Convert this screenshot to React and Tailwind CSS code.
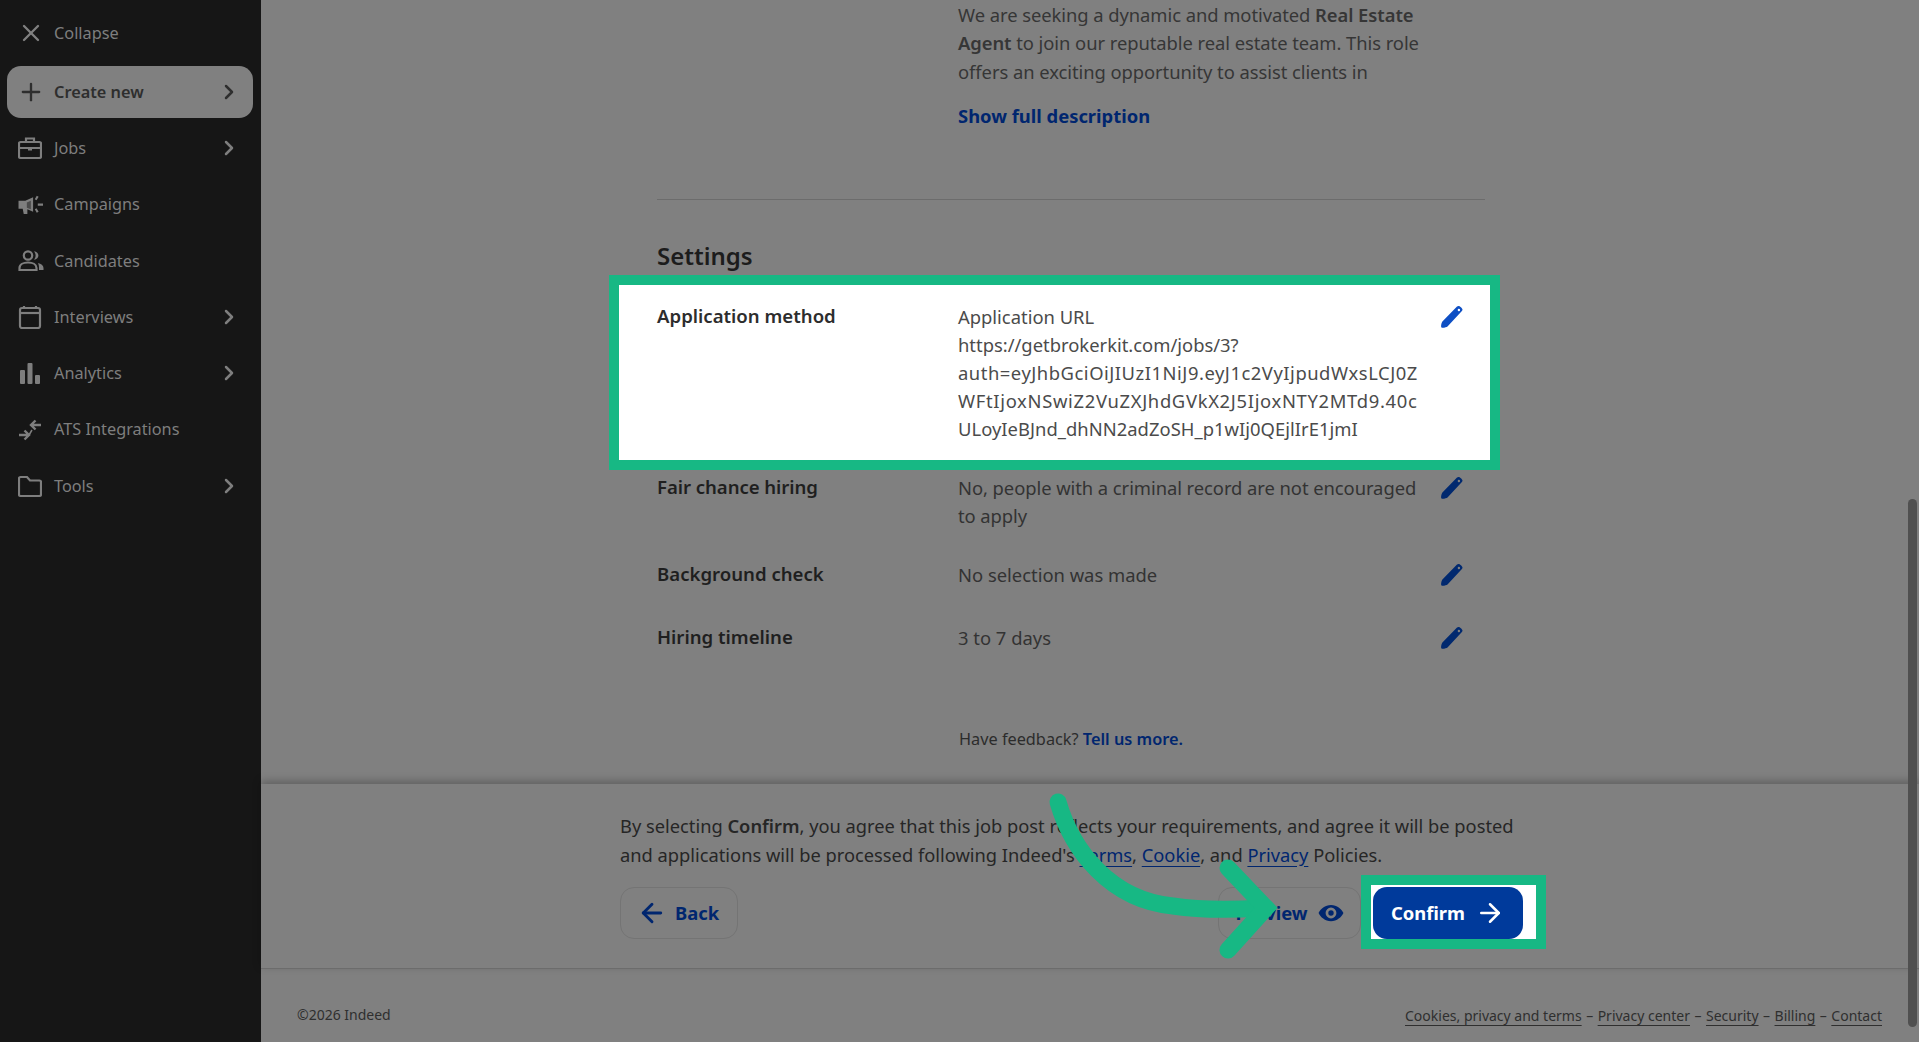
import React from 'react';
import { X, Plus, ChevronRight, ArrowLeft, ArrowRight } from 'lucide-react';

const Briefcase = () => (
  <svg width="24" height="24" viewBox="0 0 24 24" fill="none" stroke="currentColor" strokeWidth="2.200">
    <rect x="1" y="6" width="22" height="16" rx="1.500" />
    <path d="M8 6V2.500h8V6M1 12h22" />
    <path d="M10 12h4v2.500h-4z" fill="currentColor" stroke="none" />
  </svg>
);
const Megaphone = () => (
  <svg width="25" height="25" viewBox="0 0 24 24" fill="currentColor">
    <path d="M0.500 8.500h6.500L14.500 5v14L9 16.500V21H5.500l-1-5H0.500z" />
    <path d="M8.500 10v5l3.800 1.500V8.500z" fill="#161616" opacity="0.5" />
    <path d="M18 3.500l1.800 1-2 3.400-1.700-1zM19 11h5v2.200h-5zM17.800 15.500l2 3.500-1.800 1-1.900-3.500z" />
  </svg>
);
const Users = () => (
  <svg width="26" height="24" viewBox="0 0 26 24" fill="none" stroke="currentColor" strokeWidth="2.200">
    <circle cx="10" cy="6.500" r="4.200" />
    <path d="M1.500 21v-2c0-3.500 4-5.500 8.500-5.500s8.500 2 8.500 5.500v2z" />
    <path d="M16 2.200c2.800.4 4.400 2.200 4.400 4.300s-1.600 3.900-4.400 4.300c1-1.200 1.600-2.600 1.600-4.300S17 3.400 16 2.200z" fill="currentColor" stroke="none" />
    <path d="M20 14c3 .8 5.500 2.400 5.500 5v2H21v-2c0-2-.4-3.600-1-5z" fill="currentColor" stroke="none" />
  </svg>
);
const Calendar = () => (
  <svg width="24" height="24" viewBox="0 0 24 24" fill="none" stroke="currentColor" strokeWidth="2.200">
    <rect x="2" y="3" width="20" height="20" rx="2" />
    <path d="M2 8h20" />
    <path d="M6 1v3M18 1v3" />
  </svg>
);
const Bars = () => (
  <svg width="24" height="24" viewBox="0 0 24 24" fill="currentColor">
    <rect x="2" y="9" width="5" height="14" rx="1" />
    <rect x="9.500" y="2" width="5" height="21" rx="1" />
    <rect x="17" y="14" width="5" height="9" rx="1" />
  </svg>
);
const Ats = () => (
  <svg width="24" height="24" viewBox="0 0 24 24" fill="none" stroke="currentColor" strokeWidth="2.400">
    <path d="M1 17h9M6.500 12.500L11 17l-4.500 4.500" />
    <path d="M23 7h-9M17.500 2.500L13 7l4.500 4.500" />
    <path d="M11 17l3-5" strokeWidth="1.500" />
  </svg>
);
const Folder = () => (
  <svg width="24" height="24" viewBox="0 0 24 24" fill="none" stroke="currentColor" strokeWidth="2.200">
    <path d="M1 4.500A1.500 1.500 0 0 1 2.500 3h6.500l3 3.500h9.500A1.500 1.500 0 0 1 23 8v12.500a1.500 1.500 0 0 1-1.500 1.500h-19A1.500 1.500 0 0 1 1 20.500z" />
  </svg>
);

const Pencil = ({ className }) => (
  <svg width="24" height="24" viewBox="0 0 24 24" className={className} fill="currentColor">
    <path fillRule="evenodd" d="M18.500 1c1.200 0 3.900 2.200 4 3.500 0 .6-.2 1-.6 1.500L7.500 21.500c-.8.800-5 1.800-6 1-1-1 .1-5 .9-6L17 1.600c.5-.4 1-.6 1.500-.6zm.4 2.800a1.200 1.200 0 1 0 0 2.400 1.200 1.200 0 0 0 0-2.400z" />
  </svg>
);

const EyeFilled = () => (
  <svg width="26" height="26" viewBox="0 0 24 24" fill="currentColor">
    <path fillRule="evenodd" d="M12 4.500C6.500 4.500 2.300 8.200.5 12c1.800 3.800 6 7.500 11.500 7.500S21.700 15.800 23.500 12C21.700 8.200 17.500 4.500 12 4.500zM12 7a5 5 0 1 1 0 10 5 5 0 0 1 0-10zm0 2.500a2.500 2.500 0 1 0 0 5 2.500 2.500 0 0 0 0-5z" />
  </svg>
);

const navItems = [
  { label: 'Jobs', icon: Briefcase, arrow: true },
  { label: 'Campaigns', icon: Megaphone },
  { label: 'Candidates', icon: Users },
  { label: 'Interviews', icon: Calendar, arrow: true },
  { label: 'Analytics', icon: Bars, arrow: true },
  { label: 'ATS Integrations', icon: Ats },
  { label: 'Tools', icon: Folder, arrow: true },
];

const Sidebar = () => (
  <aside className="w-[261px] shrink-0 bg-[#161616] text-[#7e7e7e] text-[16.300px] pl-[7px] pr-[8px]">
    <div className="flex items-center h-[66px] pl-[10px] gap-[9px]">
      <X size={28} strokeWidth={2} className="text-[#808080]" />
      <span>Collapse</span>
    </div>
    <div className="flex items-center h-[52px] rounded-[14px] bg-[#808080] text-[#2e2e2e] font-semibold pl-[10px] pr-[12px] gap-[9px]">
      <Plus size={28} strokeWidth={2} />
      <span className="flex-1">Create new</span>
      <ChevronRight size={24} strokeWidth={2.500} />
    </div>
    <nav className="flex flex-col pt-[2px]">
      {navItems.map((item) => {
        const Icon = item.icon;
        return (
          <div key={item.label} className="flex items-center h-[56.300px] pl-[11px] pr-[12px]">
            <span className="w-[36px] shrink-0 flex items-center"><Icon /></span>
            <span className="flex-1">{item.label}</span>
            {item.arrow && <ChevronRight size={24} strokeWidth={2.500} />}
          </div>
        );
      })}
    </nav>
  </aside>
);

const Row = ({ label, pencilClass = 'text-[#01296f]', labelClass = 'text-[#1f1f1f]', valueClass = 'text-[#333333]', children, className = '' }) => (
  <div className={`relative flex ${className}`}>
    <div className={`w-[301px] shrink-0 font-semibold text-[18.600px] leading-[28px] ${labelClass}`}>{label}</div>
    <div className={`w-[470px] shrink-0 pt-[1px] leading-[28px] ${valueClass}`}>{children}</div>
    <div className="pl-[12px] pt-[3px]"><Pencil className={pencilClass} /></div>
  </div>
);

export default function App() {
  return (
    <div
      className="relative flex h-[1042px] w-full overflow-hidden bg-[#808080] text-[18.400px]"
      style={{ fontFamily: '"Noto Sans", sans-serif' }}
    >
      <Sidebar />
      <main className="flex-1 min-w-0 flex flex-col">
        {/* scrolled job post summary */}
        <div className="relative h-[784px] shrink-0 overflow-hidden pl-[396px] pt-[1px]">
          <div className="pl-[301px] w-[771px] text-[#363636] leading-[28.300px]">
            <p className="tracking-[-0.060px]">We are seeking a dynamic and motivated <b className="font-semibold">Real Estate Agent</b> to join our reputable real estate team. This role offers an exciting opportunity to assist clients in</p>
            <p className="mt-[16px] font-bold text-[#00266f]">Show full description</p>
          </div>
          <div className="mt-[69px] w-[828px] border-t border-[#6c6c6c]" />
          <h2 className="mt-[40px] text-[24px] leading-[32px] font-semibold text-[#1c1c1c]">Settings</h2>

          <div className="relative mt-[30px]">
            <div className="absolute left-[-48px] top-[-27px] w-[891px] h-[195px] border-[10px] border-[#17b884] bg-white" />
            <Row label="Application method" pencilClass="text-[#0e4fc4]" labelClass="text-[#2d2d2d]" valueClass="text-[#4b4b4b]">
              Application URL<br />
              https://getbrokerkit.com/jobs/3?<br />
              <span className="tracking-[0.530px]">auth=eyJhbGciOiJIUzI1NiJ9.eyJ1c2VyIjpudWxsLCJ0Z</span><br />
              <span className="tracking-[0.680px]">WFtIjoxNSwiZ2VuZXJhdGVkX2J5IjoxNTY2MTd9.40c</span><br />
              <span className="tracking-[0.030px]">ULoyIeBJnd_dhNN2adZoSH_p1wIj0QEjlIrE1jmI</span>
            </Row>
          </div>
          <Row label="Fair chance hiring" className="mt-[30px] tracking-[-0.060px]">
            No, people with a criminal record are not encouraged to apply
          </Row>
          <Row label="Background check" className="mt-[30px]">No selection was made</Row>
          <Row label="Hiring timeline" className="mt-[34px]">3 to 7 days</Row>
          <p className="mt-[75px] pl-[302px] text-[16.300px] leading-[24px] text-[#2c2c2c]">
            Have feedback? <b className="font-semibold text-[#00266f]">Tell us more.</b>
          </p>
        </div>

        {/* confirm bar */}
        <div className="h-[185px] shrink-0 border-b border-[#6c6c6c] shadow-[0_-3px_8px_rgba(0,0,0,0.25)] pl-[359px] pt-[28px]">
          <p className="w-[905px] text-[18.300px] leading-[28.500px] text-[#262626]">
            By selecting <b className="font-semibold">Confirm</b>, you agree that this job post reflects your requirements, and agree it will be posted and applications will be processed following Indeed's{' '}
            <u className="text-[#00266f] underline-offset-4">Terms</u>, <u className="text-[#00266f] underline-offset-4">Cookie</u>, and <u className="text-[#00266f] underline-offset-4">Privacy</u> Policies.
          </p>
          <div className="mt-[18px] flex w-[903px] items-center justify-between">
            <button className="flex items-center gap-[8px] h-[52px] w-[118px] justify-center rounded-[14px] border border-[#747474] pr-[2px] text-[#00266f] font-bold">
              <ArrowLeft size={30} strokeWidth={2.300} />
              Back
            </button>
            <div className="flex items-center gap-[12px]">
              <button className="flex items-center justify-center gap-[10px] h-[52px] w-[143px] rounded-[14px] border border-[#747474] text-[#00266f] font-bold">
                Preview
                <EyeFilled />
              </button>
              <div className="relative">
                <div className="absolute left-[-12px] top-[-12px] w-[185px] h-[74px] border-[10px] border-[#17b884] bg-white" />
                <button className="relative flex items-center justify-center gap-[10px] h-[52px] w-[150px] rounded-[14px] bg-[#003a9b] text-white font-bold">
                  Confirm
                  <ArrowRight size={30} strokeWidth={2} />
                </button>
              </div>
            </div>
          </div>
        </div>

        {/* page footer */}
        <footer className="flex-1 flex items-center justify-between pl-[36px] pr-[37px] pt-[18px] text-[14px] text-[#2f2f2f]">
          <span>©2026 Indeed</span>
          <span className="flex items-center gap-[4.500px] pt-[2px]">
            <u className="underline-offset-4">Cookies, privacy and terms</u> – <u className="underline-offset-4">Privacy center</u> – <u className="underline-offset-4">Security</u> – <u className="underline-offset-4">Billing</u> – <u className="underline-offset-4">Contact</u>
          </span>
        </footer>
      </main>

      {/* scrollbar thumb */}
      <div className="absolute left-[1908px] top-[499px] w-[9px] h-[528px] rounded-full bg-[#505050]" />

      {/* tutorial arrow */}
      <svg className="absolute left-0 top-0 pointer-events-none" width="1919" height="1042" fill="none" stroke="#17b884" strokeWidth="17" strokeLinecap="round" strokeLinejoin="miter">
        <path d="M1058 802C1072 850 1110 900 1173 906C1200 910 1230 910 1262 908" />
        <path d="M1228 868L1266 908L1228 950" />
      </svg>
    </div>
  );
}
